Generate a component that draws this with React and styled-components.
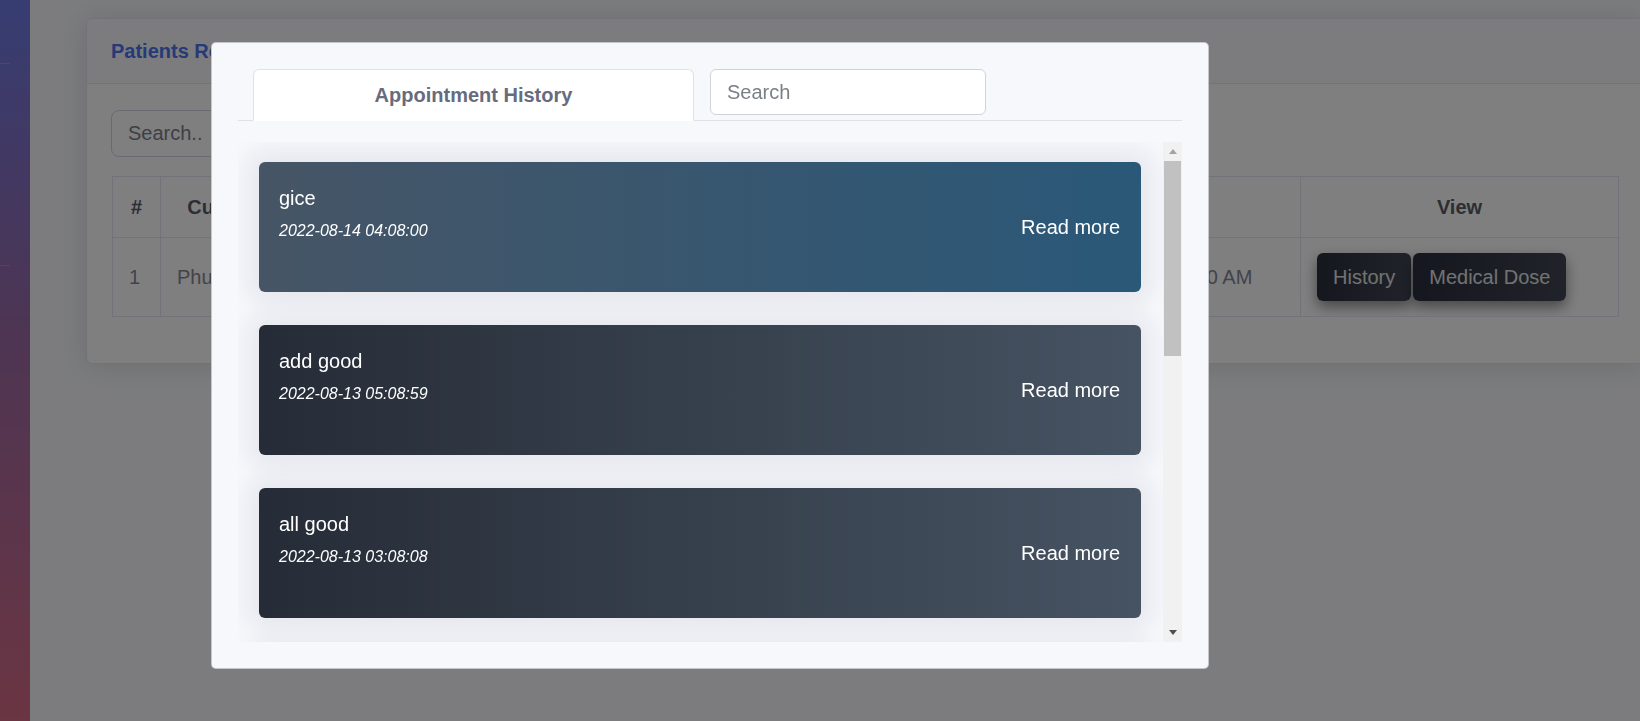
import React from "react";
import styled, { createGlobalStyle } from "styled-components";

const GlobalStyle = createGlobalStyle`
  html, body { margin: 0; padding: 0; height: 100%; overflow: hidden; }
  body {
    font-family: "Liberation Sans", Arial, Helvetica, sans-serif;
    background: #f8f9fc;
  }
  *, *::before, *::after { box-sizing: border-box; }
`;

const Layout = styled.div`
  display: flex;
  min-height: 100vh;
`;

const Sidebar = styled.aside`
  width: 30px;
  flex-shrink: 0;
  display: flex;
  flex-direction: column;
  background: linear-gradient(180deg, #6e7ae4 0%, #9a6aa8 45%, #d66a86 100%);
`;

const SidebarDivider = styled.hr`
  margin: ${(p) => p.$top}px 0 0;
  width: 10px;
  border: 0;
  border-top: 1px solid rgba(255, 255, 255, 0.18);
`;

const Main = styled.main`
  flex: 1;
  min-width: 0;
  overflow: hidden;
  padding: 18px 0 0 56px;
`;

const Card = styled.section`
  width: 1558px;
  background: #fff;
  border: 1px solid #e3e6f0;
  border-radius: 6px;
  box-shadow: 0 2px 28px rgba(58, 59, 69, 0.15);
  overflow: hidden;
`;

const CardHeader = styled.header`
  padding: 20px 24px;
  background: #f8f9fc;
  border-bottom: 1px solid #e3e6f0;
`;

const CardTitle = styled.h6`
  margin: 0;
  font-size: 20px;
  line-height: 24px;
  font-weight: 700;
  color: #4a74ec;
`;

const CardBody = styled.div`
  padding: 26px 25px 46px;
  display: flex;
  flex-direction: column;
  gap: 19px;
`;

const SearchField = styled.input`
  width: 420px;
  height: 47px;
  padding: 0 16px;
  font-family: inherit;
  font-size: 20px;
  color: #6e707e;
  background: #fff;
  border: 1px solid #d1d3e2;
  border-radius: 8px;
  margin-left: -1px;
  &::placeholder { color: #7d7f8c; }
`;

const Table = styled.table`
  width: 1506px;
  table-layout: fixed;
  border-collapse: collapse;
  border: 1px solid #e3e6f0;
  font-size: 20px;
  line-height: 30px;
`;

const Th = styled.th`
  padding: 15px 16px;
  border: 1px solid #e3e6f0;
  font-weight: 700;
  color: #5a5c69;
  text-align: center;
  white-space: nowrap;
  overflow: hidden;
`;

const Td = styled.td`
  padding: 15px 16px;
  border: 1px solid #e3e6f0;
  color: #858796;
  text-align: left;
  vertical-align: middle;
  white-space: nowrap;
  overflow: hidden;
`;

const ButtonGroup = styled.div`
  display: flex;
  gap: 2px;
`;

const ActionButton = styled.button`
  height: 48px;
  padding: 0 16px;
  font-family: inherit;
  font-size: 20px;
  color: #e4e4e4;
  border: 0;
  border-radius: 6px;
  background: linear-gradient(90deg, #2a2f3d 0%, #404654 100%);
  box-shadow: 0 6px 14px rgba(0, 0, 0, 0.45);
`;

const Overlay = styled.div`
  position: fixed;
  inset: 0;
  background: rgba(0, 0, 0, 0.5);
  z-index: 10;
`;

const Modal = styled.div`
  position: absolute;
  left: 211px;
  top: 42px;
  width: 998px;
  padding: 26px;
  background: #f7f8fc;
  border: 1px solid rgba(0, 0, 0, 0.2);
  border-radius: 5px;
  display: flex;
  flex-direction: column;
  gap: 21px;
`;

const Nav = styled.div`
  display: flex;
  align-items: flex-start;
  gap: 16px;
  padding-left: 15px;
  border-bottom: 1px solid #dee2e6;
`;

const Tab = styled.button`
  width: 441px;
  height: 52px;
  margin-bottom: -1px;
  padding: 0;
  font-family: inherit;
  font-size: 20px;
  font-weight: 700;
  color: #676b7e;
  background: #fff;
  border: 1px solid #dee2e6;
  border-bottom-color: #fff;
  border-radius: 6px 6px 0 0;
`;

const NavSearch = styled.input`
  width: 276px;
  height: 46px;
  padding: 0 16px;
  font-family: inherit;
  font-size: 20px;
  color: #495057;
  background: #fff;
  border: 1px solid #ced4da;
  border-radius: 6px;
  &::placeholder { color: #7b8088; }
`;

const ScrollArea = styled.div`
  height: 500px;
  display: flex;
`;

const Viewport = styled.div`
  flex: 1;
  min-width: 0;
  overflow: hidden;
  display: flex;
  flex-direction: column;
  gap: 33px;
  padding: 20px 22px 22px 21px;
`;

const ScrollTrack = styled.div`
  width: 19px;
  flex-shrink: 0;
  display: flex;
  flex-direction: column;
  background: #f1f1f1;
`;

const ScrollButton = styled.div`
  height: 19px;
  flex-shrink: 0;
  display: flex;
  align-items: center;
  justify-content: center;
`;

const ScrollThumb = styled.div`
  height: 195px;
  margin: 0 1px;
  background: #c1c1c1;
`;

const ScrollRest = styled.div`
  flex: 1;
`;

const HistoryCard = styled.article`
  flex-shrink: 0;
  height: 130px;
  display: flex;
  align-items: center;
  justify-content: space-between;
  padding: 0 21px 0 20px;
  border-radius: 6px;
  color: #fff;
  background: ${(p) =>
    p.$latest
      ? "linear-gradient(90deg, #465566 0%, #2a5878 100%)"
      : "linear-gradient(90deg, #262c37 0%, #465362 100%)"};
  box-shadow: 0 0 24px 12px rgba(20, 30, 50, 0.07);
`;

const CardInfo = styled.div`
  align-self: flex-start;
  padding-top: 21px;
  display: flex;
  flex-direction: column;
  gap: 6px;
`;

const Note = styled.div`
  font-size: 20px;
  line-height: 30px;
`;

const Stamp = styled.div`
  font-size: 16px;
  line-height: 24px;
  font-style: italic;
`;

const ReadMore = styled.span`
  font-size: 20px;
  line-height: 30px;
  color: #fff;
`;

const Arrow = ({ down, color }) => (
  <svg width="8" height="5" viewBox="0 0 8 5">
    <path d={down ? "M0 0L8 0L4 5Z" : "M0 5L4 0L8 5Z"} fill={color} />
  </svg>
);

const history = [
  { note: "gice", at: "2022-08-14 04:08:00", latest: true },
  { note: "add good", at: "2022-08-13 05:08:59" },
  { note: "all good", at: "2022-08-13 03:08:08" },
  { note: "fine", at: "2022-08-12 09:15:42" },
  { note: "checkup done", at: "2022-08-11 02:40:10" },
  { note: "follow up", at: "2022-08-10 11:05:33" },
  { note: "first visit", at: "2022-08-09 08:30:00" },
];

const columns = [
  { title: "#", width: 48 },
  { title: "Customer Name", width: 207 },
  { title: "Doctor", width: 338 },
  { title: "Phone", width: 338 },
  { title: "Date", width: 257 },
  { title: "View", width: 318 },
];

export default function App() {
  return (
    <>
      <GlobalStyle />
      <Layout>
        <Sidebar>
          <SidebarDivider $top={63} />
          <SidebarDivider $top={201} />
        </Sidebar>
        <Main>
          <Card>
            <CardHeader>
              <CardTitle>Patients Records</CardTitle>
            </CardHeader>
            <CardBody>
              <SearchField placeholder="Search.." />
              <Table>
                <colgroup>
                  {columns.map((c) => (
                    <col key={c.title} style={{ width: c.width }} />
                  ))}
                </colgroup>
                <thead>
                  <tr>
                    {columns.map((c) => (
                      <Th key={c.title}>{c.title}</Th>
                    ))}
                  </tr>
                </thead>
                <tbody>
                  <tr>
                    <Td>1</Td>
                    <Td>Phuong Nguyen</Td>
                    <Td>Dr. Tran Minh</Td>
                    <Td>0912 345 678</Td>
                    <Td>2022-08-14 10:00 AM</Td>
                    <Td>
                      <ButtonGroup>
                        <ActionButton>History</ActionButton>
                        <ActionButton>Medical Dose</ActionButton>
                      </ButtonGroup>
                    </Td>
                  </tr>
                </tbody>
              </Table>
            </CardBody>
          </Card>
        </Main>
      </Layout>
      <Overlay>
        <Modal>
          <Nav>
            <Tab>Appointment History</Tab>
            <NavSearch placeholder="Search" />
          </Nav>
          <ScrollArea>
            <Viewport>
              {history.map((h) => (
                <HistoryCard key={h.at} $latest={h.latest}>
                  <CardInfo>
                    <Note>{h.note}</Note>
                    <Stamp>{h.at}</Stamp>
                  </CardInfo>
                  <ReadMore>Read more</ReadMore>
                </HistoryCard>
              ))}
            </Viewport>
            <ScrollTrack>
              <ScrollButton>
                <Arrow color="#a3a3a3" />
              </ScrollButton>
              <ScrollThumb />
              <ScrollRest />
              <ScrollButton>
                <Arrow down color="#505050" />
              </ScrollButton>
            </ScrollTrack>
          </ScrollArea>
        </Modal>
      </Overlay>
    </>
  );
}
